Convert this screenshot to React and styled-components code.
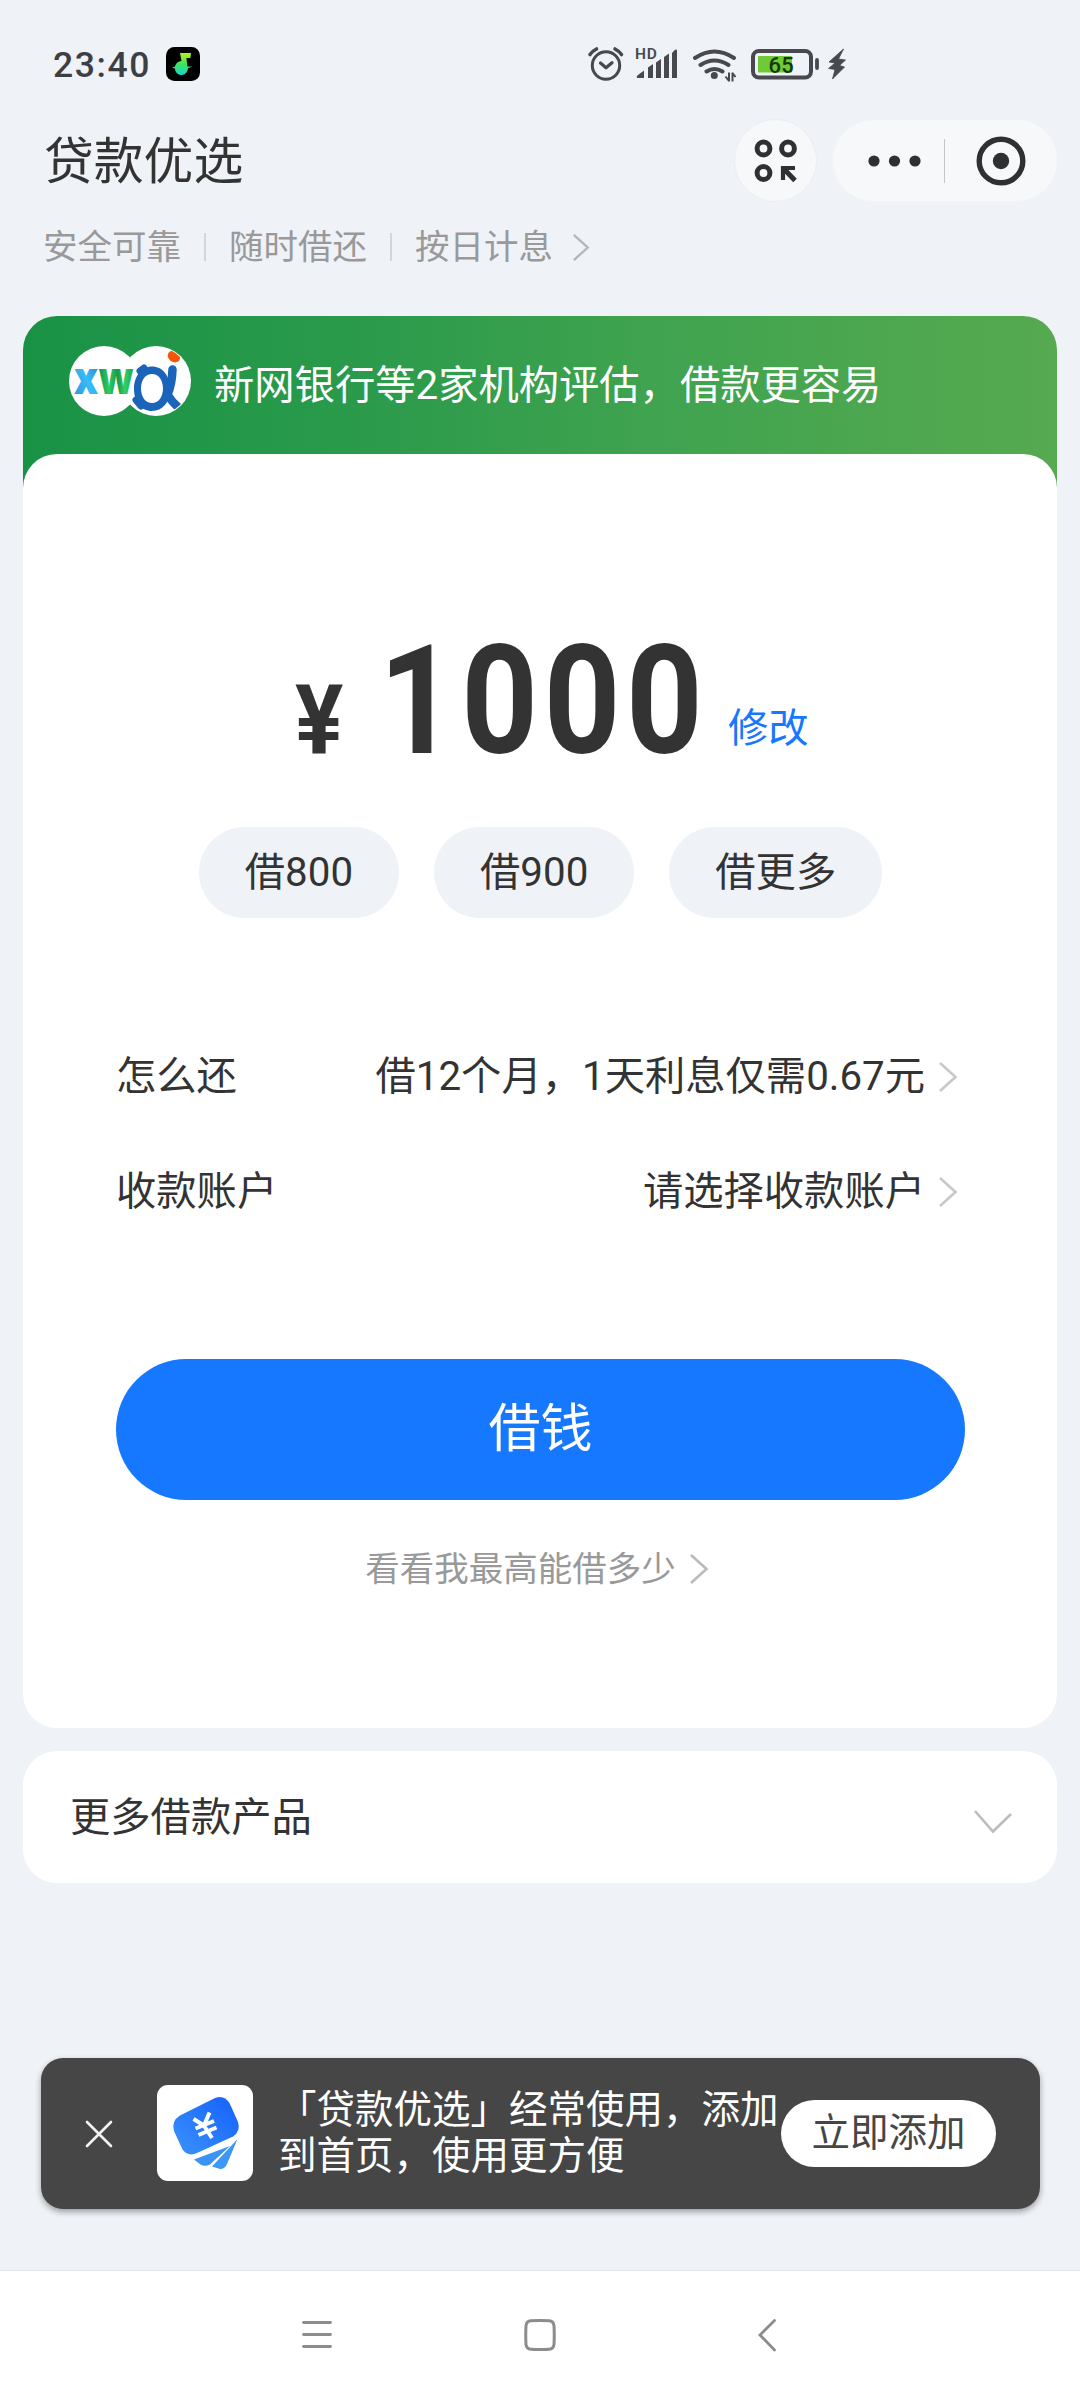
import React from 'react';
import styled, { createGlobalStyle } from 'styled-components';

const GlobalStyle = createGlobalStyle`
    * {
        box-sizing: border-box;
    }

    body {
        margin: 0;
        background: #eff2f7;
        color: #333;
        font-family: Roboto, 'Noto Sans CJK SC', sans-serif;
        font-size: 40.3px;
        line-height: 48px;
    }

    svg {
        display: block;
        flex-shrink: 0;
    }

    button {
        border: 0;
        padding: 0;
        font: inherit;
        color: inherit;
    }
`;

const Screen = styled.div`
    display: flex;
    flex-direction: column;
    width: 1080px;
    height: 2400px;
    overflow: hidden;
`;

const StatusBar = styled.div`
    display: flex;
    align-items: center;
    height: 120px;
    padding: 8px 0 0 53px;
`;

const Clock = styled.span`
    width: 113px;
    padding-top: 2px;
    font-size: 35.5px;
    font-weight: 500;
    letter-spacing: 1.6px;
    color: #3e3f44;
    white-space: nowrap;
`;

const StatusIcons = styled.div`
    margin-left: 386px;
`;

const Header = styled.header`
    display: flex;
    align-items: center;
    height: 81px;
    padding: 0 23px 0 44px;
`;

const Title = styled.h1`
    flex: 1;
    margin: 0;
    padding-top: 3px;
    font-size: 49.8px;
    font-weight: 400;
    line-height: 78px;
`;

const RoundButton = styled.button`
    display: flex;
    align-items: center;
    justify-content: center;
    width: 81px;
    height: 81px;
    border-radius: 50%;
    background: #f7f8fa;
    box-shadow: 0 0 0 1px #ebedf3;
`;

const Capsule = styled.div`
    display: flex;
    align-items: center;
    width: 224px;
    height: 81px;
    margin-left: 17px;
    padding-left: 35px;
    border-radius: 41px;
    background: #f7f8fa;
    box-shadow: 0 0 0 1px #f1f3f7;
`;

const CapsuleDivider = styled.div`
    width: 1px;
    height: 44px;
    margin: 0 31px 0 23px;
    background: #c4c5c9;
`;

const Slogan = styled.div`
    display: flex;
    align-items: center;
    height: 92px;
    margin-bottom: 23px;
    padding-left: 43px;
    font-size: 34.5px;
    color: #999;

    svg {
        margin-left: 18px;
    }
`;

const SloganDivider = styled.div`
    width: 2px;
    height: 28px;
    margin: 0 23px;
    background: #d3d5da;
`;

const LoanPanel = styled.section`
    width: 1034px;
    margin: 0 23px;
    border-radius: 34px;
    background: linear-gradient(90deg, #199246 0%, #2c9b4b 35%, #3fa34f 60%, #56aa50 100%) no-repeat 0 0 / 100% 200px;
`;

const Banner = styled.div`
    display: flex;
    align-items: center;
    height: 138px;
    padding: 0 0 8px 46px;
    color: #fff;

    span {
        margin: 9px 0 0 23px;
    }
`;

const LoanCard = styled.div`
    height: 1274px;
    padding: 171px 92px 0 93px;
    border-radius: 34px;
    background: #fff;
`;

const AmountRow = styled.div`
    display: flex;
    align-items: baseline;
    height: 152px;
    padding-left: 179px;
    font-weight: 700;
`;

const Currency = styled.span`
    width: 84px;
    font-size: 97px;
    line-height: 97px;
    transform: scaleX(0.93);
    transform-origin: left;
`;

const Amount = styled.span`
    width: 349px;
    font-size: 152px;
    line-height: 152px;
    letter-spacing: 6.4px;
    white-space: nowrap;
    transform: scaleX(0.88);
    transform-origin: left;
`;

const EditLink = styled.a`
    align-self: flex-end;
    margin-bottom: 28px;
    line-height: 40px;
    font-weight: 400;
    color: #1677ff;
`;

const QuickAmounts = styled.div`
    display: flex;
    justify-content: center;
    gap: 35px;
    margin-top: 50px;
`;

const Pill = styled.button`
    height: 91px;
    padding: 0 46px;
    border-radius: 46px;
    background: #eff2f7;
`;

const DetailList = styled.div`
    margin-top: 101px;
`;

const DetailRow = styled.div`
    display: flex;
    align-items: center;
    justify-content: space-between;
    height: 115px;
`;

const DetailValue = styled.div`
    display: flex;
    align-items: center;
    gap: 13px;
    padding-right: 7px;
`;

const PrimaryButton = styled.button`
    width: 849px;
    height: 141px;
    margin-top: 110px;
    border-radius: 71px;
    background: #1677ff;
    color: #fff;
    font-size: 52px;
`;

const LimitLink = styled.a`
    display: flex;
    align-items: center;
    justify-content: center;
    gap: 13px;
    height: 48px;
    margin: 45px 7px 0 0;
    font-size: 34.5px;
    color: #999;
`;

const MoreProducts = styled.section`
    display: flex;
    align-items: center;
    justify-content: space-between;
    width: 1034px;
    height: 132px;
    margin: 23px 23px 0;
    padding: 2px 44px 0 47px;
    border-radius: 34px;
    background: #fff;

    svg {
        margin-top: 8px;
    }
`;

const Toast = styled.div`
    display: flex;
    align-items: center;
    width: 999px;
    height: 151px;
    margin: 175px 40px 0 41px;
    padding: 0 44px;
    border-radius: 22px;
    background: #464646;
    box-shadow: 0 3px 6px rgba(0, 0, 0, 0.35);
    font-size: 38.5px;
    color: #fff;
`;

const AppTile = styled.div`
    width: 96px;
    height: 96px;
    margin: 0 25px 1px 44px;
    border-radius: 11px;
    background: #fff;
`;

const ToastText = styled.p`
    width: 503px;
    margin: 0 0 2px;
    line-height: 46px;
    white-space: nowrap;
`;

const AddButton = styled.button`
    width: 215px;
    height: 67px;
    margin-bottom: 1px;
    border-radius: 34px;
    background: #fff;
    color: #464646;
    white-space: nowrap;
`;

const NavBar = styled.nav`
    display: flex;
    height: 130px;
    margin-top: auto;
    padding: 48px 0 0 301px;
    border-top: 1px solid #e3e5ea;
    background: #fff;
`;

const HomeIcon = styled.svg`
    margin: 0 202px 0 191px;
`;

const Chevron = ({ color = '#c8c8c8', height = 30 }) => (
    <svg width="20" height={height} viewBox="0 0 20 30" fill="none" stroke={color} strokeWidth="2.6">
        <path d="M2 1l15.500 14L2 29" />
    </svg>
);

const MusicIcon = () => (
    <svg width="34" height="34" viewBox="0 0 34 34">
        <defs>
            <linearGradient id="note" x1="0" y1="0" x2="0" y2="1">
                <stop offset="0" stopColor="#b6f31c" />
                <stop offset="0.5" stopColor="#3fe45b" />
                <stop offset="1" stopColor="#0fd9ce" />
            </linearGradient>
        </defs>
        <rect width="34" height="34" rx="8.500" fill="#000" />
        <path
            fill="url(#note)"
            d="M14 6h11l-.6 5h-4l1 8.500h4.800L22 21.300c-.5 4-3 6.700-6.500 6.700-3.600 0-6.300-2.500-6.600-6.500L6 20.600l3-1c.6-3 3-5.200 6.500-5.600z"
        />
    </svg>
);

// alarm, signal, wifi, battery and charging marks of the system bar
const SystemIcons = () => (
    <svg width="262" height="40" viewBox="586 44 262 40" fill="none" stroke="#48494e">
        <circle cx="606" cy="65.500" r="13.700" strokeWidth="3" />
        <path d="M600.500 63l5.500 4.800 6-5" strokeWidth="3.200" strokeLinecap="round" strokeLinejoin="round" />
        <path d="M590 54.500q2.500-3.500 6.500-5.500M615 49q4 2 6.500 5.500" strokeWidth="3.600" strokeLinecap="round" />
        <g fill="#48494e" stroke="none">
            <text x="635" y="59" fontSize="15.500" fontWeight="600" letterSpacing="0.8">HD</text>
            <path d="M637 78q-1-2 1-3l6-4.500V78zM648 67.500l5-3.500v14h-5zM656 62.500l5-3.500v19h-5zM664 57l5-3.500V78h-5zM672 53l3-3.200q2-1 2 1V78h-5z" />
        </g>
        <path d="M695 58q19.500-13 39 0M700.500 65q14-9 28 0M706.500 71.500q8-5 16 0" strokeWidth="4" strokeLinecap="round" />
        <circle cx="714.300" cy="75.500" r="3.500" fill="#48494e" stroke="none" />
        <path d="M729 72.500v9M729 81l-3.500-4.500M732.500 81.500v-9M732.500 73l3 4" strokeWidth="2" />
        <rect x="753" y="51" width="58" height="26.500" rx="6" strokeWidth="4" />
        <rect x="758" y="56" width="34" height="16.500" rx="1" fill="#6ecb35" stroke="none" />
        <text x="768.500" y="72.500" fontSize="22" fontWeight="500" letterSpacing="0.3" fill="#16360c" stroke="none">65</text>
        <path d="M817 60v8" strokeWidth="3.800" strokeLinecap="round" />
        <path d="M843.500 49l-14.500 13 6 1-6.500 5.500 6.500 1-2.500 9.500 12-12-5-1.500 6-5.500-7-1z" fill="#48494e" stroke="#48494e" strokeWidth="0.800" />
    </svg>
);

const AppsIcon = () => (
    <svg width="44" height="44" viewBox="0 0 44 44" fill="none" stroke="#2f3033" strokeWidth="5">
        <circle cx="9.500" cy="9.500" r="6.400" />
        <circle cx="34" cy="9.500" r="6.400" />
        <circle cx="9.500" cy="34" r="6.400" />
        <path d="M29 41V29h12" strokeWidth="4.200" />
        <path d="M29.500 29.500L41 41.500" strokeWidth="5" />
    </svg>
);

const DotsIcon = () => (
    <svg width="53" height="12" viewBox="0 0 53 12" fill="#2f3033">
        <circle cx="6" cy="6" r="5.600" />
        <circle cx="26.500" cy="6" r="5.600" />
        <circle cx="47" cy="6" r="5.600" />
    </svg>
);

const TargetIcon = () => (
    <svg width="50" height="50" viewBox="0 0 50 50">
        <circle cx="25" cy="25" r="21.800" fill="none" stroke="#2f3033" strokeWidth="5.400" />
        <circle cx="25" cy="25" r="8.200" fill="#2f3033" />
    </svg>
);

const BankLogos = () => (
    <svg width="122" height="70" viewBox="0 0 122 70">
        <defs>
            <linearGradient id="x" x1="0" y1="1" x2="1" y2="0">
                <stop offset="0" stopColor="#2a8fd8" />
                <stop offset="0.5" stopColor="#38bdfa" />
                <stop offset="1" stopColor="#2c68b4" />
            </linearGradient>
            <linearGradient id="w">
                <stop offset="0" stopColor="#14934a" />
                <stop offset="0.3" stopColor="#2fcb63" />
                <stop offset="0.55" stopColor="#17994b" />
                <stop offset="0.75" stopColor="#34cf63" />
                <stop offset="1" stopColor="#1ba552" />
            </linearGradient>
            <clipPath id="right">
                <circle cx="87" cy="35" r="34" />
            </clipPath>
        </defs>
        <circle cx="35" cy="35" r="35" fill="#fff" />
        <circle cx="87" cy="35" r="35" fill="#fff" />
        <g fontFamily="Open Sans" fontWeight="800" fontSize="45">
            <text x="5" y="47.500" fill="url(#x)" textLength="24" lengthAdjust="spacingAndGlyphs">x</text>
            <text x="29.500" y="47.500" fill="url(#w)" textLength="35" lengthAdjust="spacingAndGlyphs">w</text>
        </g>
        <g clipPath="url(#right)" fill="none" stroke="#1c63ba" strokeLinecap="round">
            <path
                fill="#1c63ba"
                stroke="none"
                fillRule="evenodd"
                d="M83 20.500c10.500 0 18 9 18 22.500S93.500 65 83 65 65 56 65 43s7.500-22.500 18-22.500zM83 28c-6.500 0-11 6-11 14.500S76.500 57 83 57s11-6 11-14.500S89.500 28 83 28z"
            />
            <path d="M71 25l4-3M67 54l5 6" strokeWidth="7" />
            <path d="M103.500 23.500q-.5 15-5 25 4 7 11 13" strokeWidth="8.500" />
            <ellipse cx="105" cy="10.500" rx="6.600" ry="5.500" fill="#f4570c" stroke="none" transform="rotate(35 105 10.500)" />
        </g>
    </svg>
);

const CardsIcon = () => (
    <svg width="96" height="96" viewBox="0 0 96 96">
        <defs>
            <linearGradient id="card" x1="0" y1="1" x2="1" y2="0">
                <stop offset="0" stopColor="#3b93fb" />
                <stop offset="1" stopColor="#1460fb" />
            </linearGradient>
        </defs>
        <path d="M37 74.500L73 61 53 79.500q-5 2.500-9.500 0z" fill="#3b93f6" />
        <path d="M55 81.500L80.500 54 70 79q-2 5-7 5z" fill="#3d97f6" />
        <path
            d="M23 30.500L58 13q9-3.500 14.500 5L81 37q3 9-5 14.500L40 68q-9 4-14.500-3.500L17 46q-3-10 6-15.500z"
            fill="url(#card)"
        />
        <g stroke="#fff" strokeWidth="4" fill="none">
            <path d="M36.500 34l10.500 6.500L52.500 27.500M46.500 40l8.500 13M38.500 43.500l18.500-7.500M41.500 50l18-7.500" />
        </g>
    </svg>
);

const CloseIcon = () => (
    <svg width="28" height="28" viewBox="0 0 28 28" stroke="#f2f2f2" strokeWidth="2.600" strokeLinecap="round">
        <path d="M2 2l24 24M26 2L2 26" />
    </svg>
);

const App = () => {
    return (
        <>
            <GlobalStyle />
            <Screen>
                <StatusBar>
                    <Clock>23:40</Clock>
                    <MusicIcon />
                    <StatusIcons>
                        <SystemIcons />
                    </StatusIcons>
                </StatusBar>
                <Header>
                    <Title>贷款优选</Title>
                    <RoundButton>
                        <AppsIcon />
                    </RoundButton>
                    <Capsule>
                        <DotsIcon />
                        <CapsuleDivider />
                        <TargetIcon />
                    </Capsule>
                </Header>
                <Slogan>
                    <span>安全可靠</span>
                    <SloganDivider />
                    <span>随时借还</span>
                    <SloganDivider />
                    <span>按日计息</span>
                    <Chevron color="#b4b6ba" height={27} />
                </Slogan>
                <LoanPanel>
                    <Banner>
                        <BankLogos />
                        <span>新网银行等2家机构评估，借款更容易</span>
                    </Banner>
                    <LoanCard>
                        <AmountRow>
                            <Currency>¥</Currency>
                            <Amount>1000</Amount>
                            <EditLink>修改</EditLink>
                        </AmountRow>
                        <QuickAmounts>
                            <Pill>借800</Pill>
                            <Pill>借900</Pill>
                            <Pill>借更多</Pill>
                        </QuickAmounts>
                        <DetailList>
                            <DetailRow>
                                <span>怎么还</span>
                                <DetailValue>
                                    借12个月，1天利息仅需0.67元
                                    <Chevron />
                                </DetailValue>
                            </DetailRow>
                            <DetailRow>
                                <span>收款账户</span>
                                <DetailValue>
                                    请选择收款账户
                                    <Chevron />
                                </DetailValue>
                            </DetailRow>
                        </DetailList>
                        <PrimaryButton>借钱</PrimaryButton>
                        <LimitLink>
                            看看我最高能借多少
                            <Chevron color="#bbb" />
                        </LimitLink>
                    </LoanCard>
                </LoanPanel>
                <MoreProducts>
                    更多借款产品
                    <svg width="40" height="26" viewBox="0 0 40 26" fill="none" stroke="#bdbdbd" strokeWidth="2.600">
                        <path d="M2 2l18 20.500L38 5" />
                    </svg>
                </MoreProducts>
                <Toast>
                    <CloseIcon />
                    <AppTile>
                        <CardsIcon />
                    </AppTile>
                    <ToastText>
                        「贷款优选」经常使用，添加
                        <br />
                        到首页，使用更方便
                    </ToastText>
                    <AddButton>立即添加</AddButton>
                </Toast>
                <NavBar>
                    <svg width="32" height="32" viewBox="0 0 32 32" stroke="#8c8c8c" strokeWidth="2.800" strokeLinecap="round">
                        <path d="M2.500 3.500h27M2.500 15.500h27M2.500 27.500h27" />
                    </svg>
                    <HomeIcon width="32" height="32" viewBox="0 0 32 32" fill="none" stroke="#8c8c8c" strokeWidth="3">
                        <path d="M7 1.800q9-.6 18 0 4.600.3 5 5 .5 9 0 18.500-.4 4.500-5 4.900-9 .7-18 0-4.600-.4-5-4.900-.5-9.500 0-18.500.4-4.700 5-5z" />
                    </HomeIcon>
                    <svg width="19" height="34" viewBox="0 0 19 34" fill="none" stroke="#8c8c8c" strokeWidth="2.800" strokeLinecap="round">
                        <path d="M16.500 1.500L2 16l14.500 15" />
                    </svg>
                </NavBar>
            </Screen>
        </>
    );
};

export default App;
